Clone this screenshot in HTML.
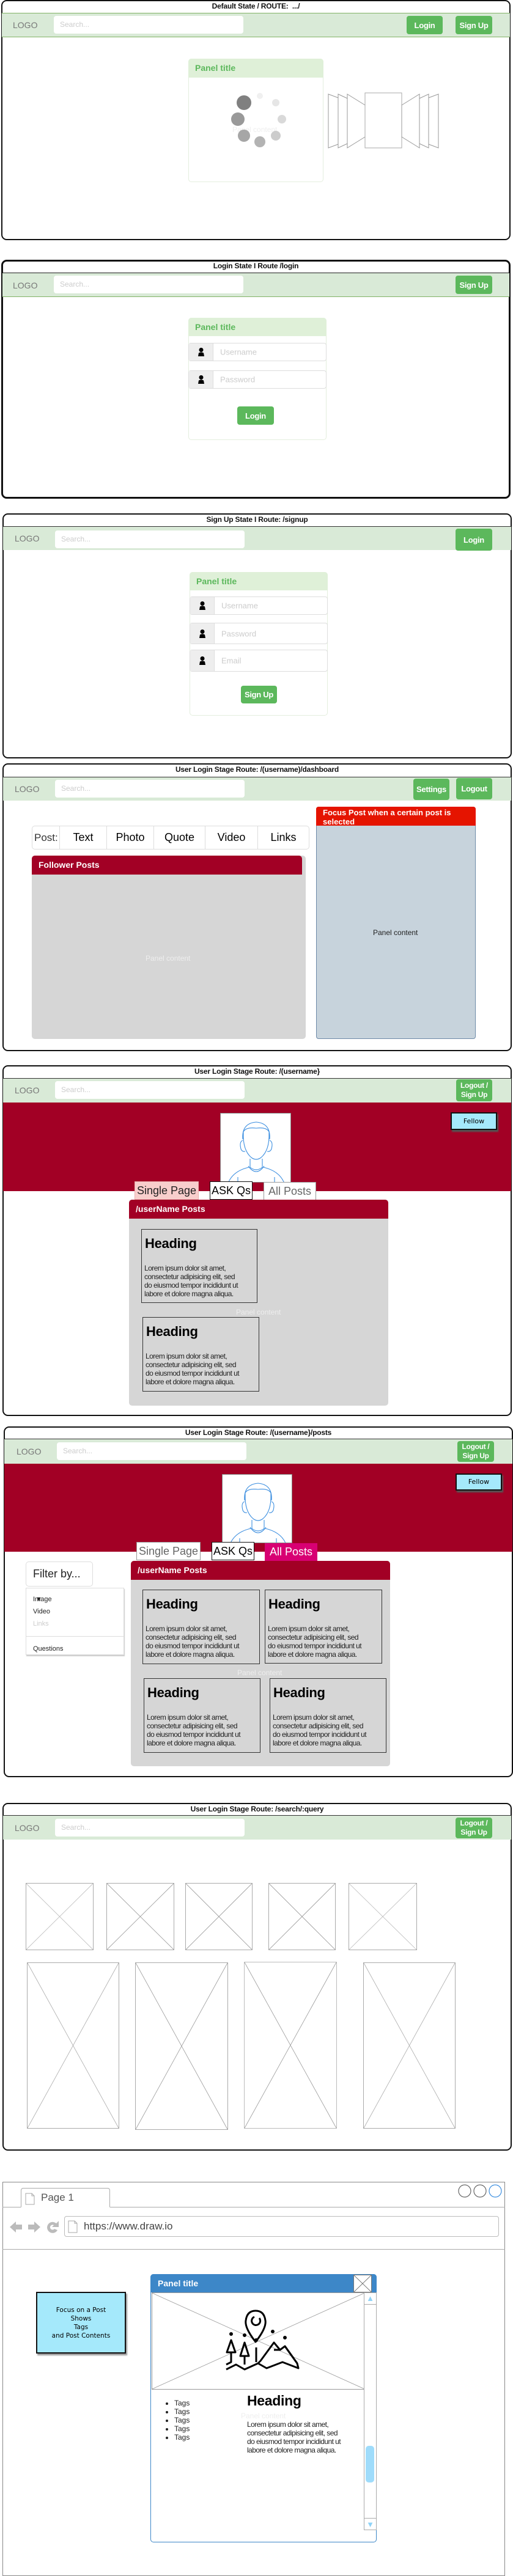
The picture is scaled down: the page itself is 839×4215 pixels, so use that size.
<!DOCTYPE html>
<html><head><meta charset="utf-8">
<style>
*{box-sizing:border-box;margin:0;padding:0}
body{width:839px;height:4211px;position:relative;background:#fff;font-family:"Liberation Sans",Arial,sans-serif;overflow:hidden}
.a{position:absolute}
.fr{position:absolute;border:2px solid #111;border-radius:9px;background:#fff}
.tt{position:absolute;font-size:12px;font-weight:bold;color:#111;text-align:center;line-height:21px;letter-spacing:-0.2px}
.nav{position:absolute;background:#d9ead7;border-top:1.5px solid #333;border-bottom:1px solid #a9cfa4}
.logo{position:absolute;font-size:14px;color:#777;line-height:20px}
.srch{position:absolute;background:#fff;border-radius:4px;font-size:12px;color:#ccc;padding-left:10px;line-height:28px}
.btn{position:absolute;background:#5cb85c;border-radius:4px;color:#fff;font-weight:bold;font-size:13px;display:flex;align-items:center;justify-content:center;text-align:center;line-height:15px;letter-spacing:-0.3px}
.pnl{position:absolute;border:1px solid #e4eede;border-radius:5px;background:#fff}
.ph{position:absolute;background:#dff0d8;color:#5cb85c;font-weight:bold;font-size:14px;padding-left:11px;border-radius:5px 5px 0 0}
.inp{position:absolute;border:1px solid #ddd;border-radius:4px;background:#fff;font-size:13px;color:#ccc}
.inp .ic{position:absolute;left:0;top:0;bottom:0;width:40px;background:#eee;border-right:1px solid #ddd;display:flex;align-items:center;justify-content:center}
.inp span{position:absolute;left:51px;top:50%;transform:translateY(-50%)}
.card{position:absolute;border:1.5px solid #333;background:#d6d6d6}
.card h3{font-size:22px;font-weight:bold;color:#000;margin:10px 0 0 5px;letter-spacing:-0.3px}
.card p{font-size:12px;line-height:14px;color:#222;margin:20px 0 0 4px;letter-spacing:-0.55px;white-space:nowrap}
.xb{position:absolute;border:1px solid #aaa}
.xb svg{position:absolute;left:0;top:0;width:100%;height:100%}
.hand{font-family:"DejaVu Sans",sans-serif}
</style></head><body>

<!-- ===== Frame 1 ===== -->
<div class="fr" style="left:2px;top:0;width:833px;height:393px"></div>
<div class="tt" style="left:2px;top:0;width:833px">Default State / ROUTE: &nbsp;.../</div>
<div class="nav" style="left:3px;top:21px;width:831px;height:40px;border-bottom:1px solid #82b366;border-top:1px solid #82b366"></div>
<div class="logo" style="left:21px;top:31px">LOGO</div>
<div class="srch" style="left:88px;top:26px;width:310px;height:29px">Search...</div>
<div class="btn" style="left:665px;top:26px;width:59px;height:30px">Login</div>
<div class="btn" style="left:745px;top:26px;width:60px;height:30px">Sign Up</div>
<div class="pnl" style="left:308px;top:96px;width:221px;height:202px"></div>
<div class="ph" style="left:308px;top:96px;width:221px;height:31px;line-height:31px">Panel title</div>
<div class="a" style="left:380px;top:205px;font-size:12px;color:#eee">Panel content</div>
<svg class="a" style="left:370px;top:145px" width="110" height="110" viewBox="370 145 110 110">
<circle cx="425" cy="157" r="5" fill="#f0f0f0"/>
<circle cx="451" cy="168" r="6" fill="#e6e6e6"/>
<circle cx="461" cy="195" r="7" fill="#d9d9d9"/>
<circle cx="451" cy="222" r="8" fill="#ccc"/>
<circle cx="425" cy="232" r="9" fill="#b3b3b3"/>
<circle cx="399" cy="222" r="10" fill="#a6a6a6"/>
<circle cx="389" cy="195" r="11" fill="#999"/>
<circle cx="399" cy="168" r="12" fill="#808080"/>
</svg>
<svg class="a" style="left:536px;top:150px" width="184" height="95" viewBox="536 150 184 95" fill="#fff" stroke="#999" stroke-width="1">
<polygon points="537,154 553,160 553,236 537,242"/>
<polygon points="553,154 568,161 568,235 553,242"/>
<polygon points="568,154 597,172 597,224 568,242"/>
<rect x="597" y="152" width="60" height="90" stroke="#aaa"/>
<polygon points="657,172 686,154 686,242 657,224"/>
<polygon points="686,161 701,154 701,242 686,235"/>
<polygon points="701,160 717,154 717,242 701,236"/>
</svg>

<!-- ===== Frame 2 ===== -->
<div class="fr" style="left:2px;top:425px;width:833px;height:391px;border-width:3px"></div>
<div class="tt" style="left:2px;top:425px;width:833px">Login State I Route /login</div>
<div class="nav" style="left:4px;top:446px;width:829px;height:40px;border-top:1.5px solid #222;border-bottom:1px solid #82b366"></div>
<div class="logo" style="left:21px;top:457px">LOGO</div>
<div class="srch" style="left:88px;top:451px;width:310px;height:29px">Search...</div>
<div class="btn" style="left:745px;top:451px;width:60px;height:30px">Sign Up</div>
<div class="pnl" style="left:308px;top:520px;width:226px;height:200px"></div>
<div class="ph" style="left:308px;top:520px;width:226px;height:30px;line-height:30px">Panel title</div>
<div class="inp" style="left:308px;top:561px;width:226px;height:30px"><div class="ic"><svg width="16" height="16" viewBox="0 0 16 16"><circle cx="8" cy="4.5" r="3.5"/><path d="M3 15 L4 9.5 Q8 7 12 9.5 L13 15Z"/></svg></div><span>Username</span></div>
<div class="inp" style="left:308px;top:606px;width:226px;height:30px"><div class="ic"><svg width="16" height="16" viewBox="0 0 16 16"><circle cx="8" cy="4.5" r="3.5"/><path d="M3 15 L4 9.5 Q8 7 12 9.5 L13 15Z"/></svg></div><span>Password</span></div>
<div class="btn" style="left:388px;top:665px;width:60px;height:30px">Login</div>

<!-- ===== Frame 3 ===== -->
<div class="fr" style="left:4px;top:840px;width:833px;height:401px"></div>
<div class="tt" style="left:4px;top:840px;width:833px">Sign Up State I Route: /signup</div>
<div class="nav" style="left:5px;top:861px;width:831px;height:39px;border-bottom:none"></div>
<div class="logo" style="left:24px;top:871px">LOGO</div>
<div class="srch" style="left:90px;top:868px;width:310px;height:29px">Search...</div>
<div class="btn" style="left:745px;top:865px;width:60px;height:36px">Login</div>
<div class="pnl" style="left:310px;top:936px;width:226px;height:235px"></div>
<div class="ph" style="left:310px;top:936px;width:226px;height:30px;line-height:30px">Panel title</div>
<div class="inp" style="left:310px;top:976px;width:226px;height:30px"><div class="ic"><svg width="16" height="16" viewBox="0 0 16 16"><circle cx="8" cy="4.5" r="3.5"/><path d="M3 15 L4 9.5 Q8 7 12 9.5 L13 15Z"/></svg></div><span>Username</span></div>
<div class="inp" style="left:310px;top:1019px;width:226px;height:35px"><div class="ic"><svg width="16" height="16" viewBox="0 0 16 16"><circle cx="8" cy="4.5" r="3.5"/><path d="M3 15 L4 9.5 Q8 7 12 9.5 L13 15Z"/></svg></div><span>Password</span></div>
<div class="inp" style="left:310px;top:1063px;width:226px;height:36px"><div class="ic"><svg width="16" height="16" viewBox="0 0 16 16"><circle cx="8" cy="4.5" r="3.5"/><path d="M3 15 L4 9.5 Q8 7 12 9.5 L13 15Z"/></svg></div><span>Email</span></div>
<div class="btn" style="left:394px;top:1122px;width:59px;height:29px">Sign Up</div>

<!-- ===== Frame 4 ===== -->
<div class="fr" style="left:4px;top:1249px;width:833px;height:471px"></div>
<div class="tt" style="left:4px;top:1249px;width:833px">User Login Stage Route: /(username)/dashboard</div>
<div class="nav" style="left:5px;top:1271px;width:831px;height:39px;border-bottom:none"></div>
<div class="logo" style="left:24px;top:1281px">LOGO</div>
<div class="srch" style="left:90px;top:1276px;width:310px;height:29px">Search...</div>
<div class="btn" style="left:676px;top:1274px;width:59px;height:35px">Settings</div>
<div class="btn" style="left:746px;top:1273px;width:59px;height:35px">Logout</div>
<div class="a" style="left:52px;top:1351px;width:454px;height:39px;border:1px solid #ddd;border-radius:5px;display:flex;font-size:18px;align-items:stretch">
<div style="width:45px;border-right:1px solid #ddd;display:flex;align-items:center;padding-left:3px;color:#333;font-size:17px">Post:</div>
<div style="width:77px;border-right:1px solid #ddd;display:flex;align-items:center;justify-content:center">Text</div>
<div style="width:77px;border-right:1px solid #ddd;display:flex;align-items:center;justify-content:center">Photo</div>
<div style="width:84px;border-right:1px solid #ddd;display:flex;align-items:center;justify-content:center">Quote</div>
<div style="width:86px;border-right:1px solid #ddd;display:flex;align-items:center;justify-content:center">Video</div>
<div style="flex:1;display:flex;align-items:center;justify-content:center">Links</div>
</div>
<div class="a" style="left:52px;top:1400px;width:448px;height:300px;background:#d6d6d6;border-radius:5px"></div>
<div class="a" style="left:52px;top:1400px;width:442px;height:31px;background:#a20025;border-radius:5px 5px 0 0;color:#fff;font-weight:bold;font-size:14px;line-height:31px;padding-left:11px">Follower Posts</div>
<div class="a" style="left:238px;top:1561px;font-size:12px;color:#eee">Panel content</div>
<div class="a" style="left:517px;top:1320px;width:261px;height:380px;background:#c7d3dc;border:1px solid #6d8aa8;border-radius:4px"></div>
<div class="a" style="left:517px;top:1320px;width:261px;height:31px;background:#e51400;border-radius:4px 4px 0 0;color:#fff;font-weight:bold;font-size:13px;line-height:15px;padding:2px 0 0 11px">Focus Post when a certain post is selected</div>
<div class="a" style="left:610px;top:1519px;font-size:12px;color:#222">Panel content</div>

<!-- ===== Frame 5 ===== -->
<div class="fr" style="left:4px;top:1743px;width:833px;height:574px"></div>
<div class="tt" style="left:4px;top:1743px;width:833px">User Login Stage Route: /(username}</div>
<div class="nav" style="left:5px;top:1764px;width:831px;height:40px;border-bottom:none"></div>
<div class="logo" style="left:24px;top:1774px">LOGO</div>
<div class="srch" style="left:90px;top:1769px;width:310px;height:29px">Search...</div>
<div class="btn" style="left:746px;top:1766px;width:59px;height:36px;font-size:12px">Logout /<br>Sign Up</div>
<div class="a" style="left:5px;top:1804px;width:831px;height:145px;background:#a20025"></div>
<div class="a" style="left:360px;top:1821px;width:116px;height:114px;background:#fff;border:1px solid #888;overflow:hidden">
<svg width="116" height="114" viewBox="0 0 116 114" fill="none" stroke="#3d8fe0" stroke-width="1.1">
<path d="M36 42 Q34 16 58 14 Q82 16 80 42 L79 30 Q75 22 58 24 Q41 22 37 30Z"/>
<path d="M37 32 Q36 60 50 72 Q58 78 66 72 Q80 60 79 32"/>
<path d="M36 44 Q30 46 33 58 Q35 63 40 62"/><path d="M80 44 Q86 46 83 58 Q81 63 76 62"/>
<path d="M48 74 L48 88 Q58 96 68 88 L68 74"/>
<path d="M45 86 Q58 104 71 86"/>
<path d="M46 88 Q20 94 12 114"/><path d="M70 88 Q96 94 104 114"/>
<path d="M28 104 L28 114"/><path d="M88 104 L88 114"/>
</svg></div>
<div class="a hand" style="left:737px;top:1820px;width:76px;height:29px;background:#a5e9fb;border:2px solid #111;box-shadow:2px 3px 2px #555;font-size:11px;text-align:center;line-height:25px">Fellow</div>
<div class="a" style="left:220px;top:1933px;width:105px;height:30px;background:#f8cecc;border:1px solid #e8b0ae;font-size:18px;line-height:28px;text-align:center;color:#222">Single Page</div>
<div class="a" style="left:343px;top:1933px;width:70px;height:30px;background:#fff;border:1px solid #111;font-size:18px;line-height:28px;text-align:center">ASK Qs</div>
<div class="a" style="left:431px;top:1934px;width:86px;height:30px;background:#fff;border:1px solid #999;font-size:18px;line-height:28px;text-align:center;color:#666">All Posts</div>
<div class="a" style="left:211px;top:1963px;width:424px;height:337px;background:#d6d6d6;border-radius:5px"></div>
<div class="a" style="left:211px;top:1963px;width:424px;height:31px;background:#a20025;border-radius:5px 5px 0 0;color:#fff;font-weight:bold;font-size:14px;line-height:31px;padding-left:11px">/userName Posts</div>
<div class="a" style="left:386px;top:2140px;font-size:12px;color:#eee">Panel content</div>
<div class="card" style="left:231px;top:2011px;width:190px;height:121px"><h3>Heading</h3><p>Lorem ipsum dolor sit amet,<br>consectetur adipisicing elit, sed<br>do eiusmod tempor incididunt ut<br>labore et dolore magna aliqua.</p></div>
<div class="card" style="left:233px;top:2155px;width:191px;height:122px"><h3>Heading</h3><p>Lorem ipsum dolor sit amet,<br>consectetur adipisicing elit, sed<br>do eiusmod tempor incididunt ut<br>labore et dolore magna aliqua.</p></div>

<!-- ===== Frame 6 ===== -->
<div class="fr" style="left:6px;top:2334px;width:833px;height:574px"></div>
<div class="tt" style="left:6px;top:2334px;width:833px">User Login Stage Route: /(username}/posts</div>
<div class="nav" style="left:7px;top:2354px;width:831px;height:41px;border-bottom:none"></div>
<div class="logo" style="left:27px;top:2365px">LOGO</div>
<div class="srch" style="left:93px;top:2360px;width:310px;height:29px">Search...</div>
<div class="btn" style="left:748px;top:2358px;width:60px;height:34px;font-size:12px">Logout /<br>Sign Up</div>
<div class="a" style="left:7px;top:2395px;width:831px;height:144px;background:#a20025"></div>
<div class="a" style="left:363px;top:2412px;width:115px;height:113px;background:#fff;border:1px solid #888;overflow:hidden">
<svg width="116" height="114" viewBox="0 0 116 114" fill="none" stroke="#3d8fe0" stroke-width="1.1">
<path d="M36 42 Q34 16 58 14 Q82 16 80 42 L79 30 Q75 22 58 24 Q41 22 37 30Z"/>
<path d="M37 32 Q36 60 50 72 Q58 78 66 72 Q80 60 79 32"/>
<path d="M36 44 Q30 46 33 58 Q35 63 40 62"/><path d="M80 44 Q86 46 83 58 Q81 63 76 62"/>
<path d="M48 74 L48 88 Q58 96 68 88 L68 74"/>
<path d="M45 86 Q58 104 71 86"/>
<path d="M46 88 Q20 94 12 114"/><path d="M70 88 Q96 94 104 114"/>
<path d="M28 104 L28 114"/><path d="M88 104 L88 114"/>
</svg></div>
<div class="a hand" style="left:745px;top:2411px;width:76px;height:28px;background:#a5e9fb;border:2px solid #111;box-shadow:2px 3px 2px #555;font-size:11px;text-align:center;line-height:24px">Fellow</div>
<div class="a" style="left:223px;top:2523px;width:105px;height:30px;background:#fff;border:1px solid #999;font-size:18px;line-height:28px;text-align:center;color:#666">Single Page</div>
<div class="a" style="left:346px;top:2523px;width:70px;height:30px;background:#fff;border:1px solid #111;font-size:18px;line-height:28px;text-align:center">ASK Qs</div>
<div class="a" style="left:433px;top:2525px;width:86px;height:30px;background:#d80073;font-size:18px;line-height:29px;text-align:center;color:#fff">All Posts</div>
<div class="a" style="left:42px;top:2555px;width:110px;height:41px;border:1px solid #ddd;border-radius:5px;font-size:18px;line-height:39px;padding-left:11px;color:#222">Filter by... <span style="font-size:11px;margin-left:4px">&#9660;</span></div>
<div class="a" style="left:42px;top:2598px;width:161px;height:110px;border:1px solid #ddd;box-shadow:1px 2px 1px #ccc;font-size:11px;color:#222">
<div class="a" style="left:11px;top:12px">Image</div>
<div class="a" style="left:11px;top:32px">Video</div>
<div class="a" style="left:11px;top:52px;color:#ccc">Links</div>
<div class="a" style="left:0;top:78px;width:159px;border-top:1px solid #ddd"></div>
<div class="a" style="left:11px;top:93px">Questions</div>
</div>
<div class="a" style="left:214px;top:2554px;width:424px;height:336px;background:#d6d6d6;border-radius:5px"></div>
<div class="a" style="left:214px;top:2554px;width:424px;height:31px;background:#a20025;border-radius:5px 5px 0 0;color:#fff;font-weight:bold;font-size:14px;line-height:31px;padding-left:11px">/userName Posts</div>
<div class="a" style="left:388px;top:2730px;font-size:12px;color:#eee">Panel content</div>
<div class="card" style="left:233px;top:2601px;width:192px;height:122px"><h3>Heading</h3><p>Lorem ipsum dolor sit amet,<br>consectetur adipisicing elit, sed<br>do eiusmod tempor incididunt ut<br>labore et dolore magna aliqua.</p></div>
<div class="card" style="left:433px;top:2601px;width:192px;height:121px"><h3>Heading</h3><p>Lorem ipsum dolor sit amet,<br>consectetur adipisicing elit, sed<br>do eiusmod tempor incididunt ut<br>labore et dolore magna aliqua.</p></div>
<div class="card" style="left:235px;top:2746px;width:191px;height:122px"><h3>Heading</h3><p>Lorem ipsum dolor sit amet,<br>consectetur adipisicing elit, sed<br>do eiusmod tempor incididunt ut<br>labore et dolore magna aliqua.</p></div>
<div class="card" style="left:441px;top:2746px;width:191px;height:122px"><h3>Heading</h3><p>Lorem ipsum dolor sit amet,<br>consectetur adipisicing elit, sed<br>do eiusmod tempor incididunt ut<br>labore et dolore magna aliqua.</p></div>

<!-- ===== Frame 7 ===== -->
<div class="fr" style="left:4px;top:2950px;width:833px;height:569px"></div>
<div class="tt" style="left:4px;top:2950px;width:833px">User Login Stage Route: /search/:query</div>
<div class="nav" style="left:5px;top:2970px;width:831px;height:40px;border-bottom:none"></div>
<div class="logo" style="left:24px;top:2981px">LOGO</div>
<div class="srch" style="left:90px;top:2976px;width:310px;height:29px">Search...</div>
<div class="btn" style="left:745px;top:2974px;width:60px;height:34px;font-size:12px">Logout /<br>Sign Up</div>
<div class="xb" style="left:42px;top:3081px;width:111px;height:110px"><svg viewBox="0 0 100 100" preserveAspectRatio="none"><path d="M0 0L100 100M100 0L0 100" stroke="#bbb" stroke-width="0.8" vector-effect="non-scaling-stroke"/></svg></div>
<div class="xb" style="left:174px;top:3081px;width:111px;height:110px"><svg viewBox="0 0 100 100" preserveAspectRatio="none"><path d="M0 0L100 100M100 0L0 100" stroke="#999" stroke-width="0.8" vector-effect="non-scaling-stroke"/></svg></div>
<div class="xb" style="left:303px;top:3081px;width:110px;height:110px"><svg viewBox="0 0 100 100" preserveAspectRatio="none"><path d="M0 0L100 100M100 0L0 100" stroke="#999" stroke-width="0.8" vector-effect="non-scaling-stroke"/></svg></div>
<div class="xb" style="left:439px;top:3081px;width:110px;height:110px"><svg viewBox="0 0 100 100" preserveAspectRatio="none"><path d="M0 0L100 100M100 0L0 100" stroke="#999" stroke-width="0.8" vector-effect="non-scaling-stroke"/></svg></div>
<div class="xb" style="left:570px;top:3081px;width:112px;height:110px"><svg viewBox="0 0 100 100" preserveAspectRatio="none"><path d="M0 0L100 100M100 0L0 100" stroke="#bbb" stroke-width="0.8" vector-effect="non-scaling-stroke"/></svg></div>
<div class="xb" style="left:44px;top:3211px;width:151px;height:272px"><svg viewBox="0 0 100 100" preserveAspectRatio="none"><path d="M0 0L100 100M100 0L0 100" stroke="#aaa" stroke-width="0.8" vector-effect="non-scaling-stroke"/></svg></div>
<div class="xb" style="left:221px;top:3211px;width:152px;height:274px"><svg viewBox="0 0 100 100" preserveAspectRatio="none"><path d="M0 0L100 100M100 0L0 100" stroke="#999" stroke-width="0.8" vector-effect="non-scaling-stroke"/></svg></div>
<div class="xb" style="left:399px;top:3210px;width:152px;height:273px;border-color:#bbb"><svg viewBox="0 0 100 100" preserveAspectRatio="none"><path d="M0 0L100 100M100 0L0 100" stroke="#999" stroke-width="0.8" vector-effect="non-scaling-stroke"/></svg></div>
<div class="xb" style="left:594px;top:3211px;width:151px;height:272px"><svg viewBox="0 0 100 100" preserveAspectRatio="none"><path d="M0 0L100 100M100 0L0 100" stroke="#aaa" stroke-width="0.8" vector-effect="non-scaling-stroke"/></svg></div>

<!-- ===== Browser mock ===== -->
<div class="a" style="left:4px;top:3570px;width:822px;height:645px;border:1px solid #888;background:#fff"></div>
<div class="a" style="left:4px;top:3611px;width:822px;border-top:1px solid #aaa"></div>
<div class="a" style="left:34px;top:3580px;width:146px;height:32px;border:1px solid #aaa;border-bottom:1px solid #fff;border-radius:4px 4px 0 0;background:#fff;font-size:17px;color:#555;line-height:30px;padding-left:32px">Page 1</div>
<svg class="a" style="left:41px;top:3588px" width="16" height="20" viewBox="0 0 16 20" fill="#fff" stroke="#aaa"><path d="M1 1H11L15 5V19H1Z M11 1V5H15"/></svg>
<svg class="a" style="left:745px;top:3573px" width="80" height="26" viewBox="745 3573 80 26" fill="none" stroke-width="1.2">
<circle cx="760" cy="3585" r="10" stroke="#666"/><circle cx="785" cy="3585" r="10" stroke="#666"/><circle cx="810" cy="3585" r="10" stroke="#3d8fe0"/></svg>
<svg class="a" style="left:14px;top:3631px" width="86" height="26" viewBox="0 0 86 26" fill="#bbb">
<path d="M2 13L12 4V9H22V17H12V22Z"/><path d="M52 13L42 4V9H32V17H42V22Z"/>
<path d="M78 7A9 9 0 1 0 80 18L75 16A4 4 0 1 1 74 10L71 13H82V3Z"/></svg>
<div class="a" style="left:105px;top:3626px;width:711px;height:34px;border:1px solid #bbb;border-radius:4px;font-size:17px;color:#444;line-height:32px;padding-left:31px">https://www.draw.io</div>
<svg class="a" style="left:111px;top:3633px" width="16" height="21" viewBox="0 0 16 21" fill="#fff" stroke="#aaa"><path d="M1 1H11L15 5V20H1Z M11 1V5H15"/></svg>
<div class="a" style="left:4px;top:3680px;width:822px;border-top:1px solid #aaa"></div>
<div class="a hand" style="left:59px;top:3750px;width:147px;height:101px;background:#a5e9fb;border:2px solid #111;box-shadow:2px 3px 2px #999;font-size:10.5px;text-align:center;display:flex;align-items:center;justify-content:center;line-height:14px">Focus on a Post<br>Shows<br>Tags<br>and Post Contents</div>
<div class="a" style="left:246px;top:3721px;width:370px;height:439px;border:1px solid #3d87c8;border-radius:5px;background:#fff"></div>
<div class="a" style="left:246px;top:3721px;width:370px;height:30px;background:#3d87c8;border-radius:5px 5px 0 0;color:#fff;font-weight:bold;font-size:14px;line-height:30px;padding-left:12px">Panel title</div>
<div class="xb" style="left:578px;top:3722px;width:30px;height:29px;background:#fff;border-color:#777"><svg viewBox="0 0 100 100" preserveAspectRatio="none"><path d="M0 0L100 100M100 0L0 100" stroke="#555" stroke-width="0.8" vector-effect="non-scaling-stroke"/></svg></div>
<div class="xb" style="left:248px;top:3751px;width:349px;height:159px;border-color:#999"><svg viewBox="0 0 100 100" preserveAspectRatio="none"><path d="M0 0L100 100M100 0L0 100" stroke="#999" stroke-width="0.8" vector-effect="non-scaling-stroke"/></svg></div>
<svg class="a" style="left:366px;top:3779px" width="126" height="106" viewBox="0 0 126 106" fill="none" stroke="#000" stroke-width="3" stroke-linejoin="round">
<path d="M52 53 Q34 30 36 18 Q38 2 52 2 Q66 2 68 18 Q70 30 52 53Z"/>
<path d="M58 14 A7 7 0 1 1 50 12"/>
<path d="M4 98 L20 90 L34 98 L56 88 L70 96 L96 86 L122 96 L120 88 L100 60 L92 66 L82 54 L60 84 L56 88"/>
<path d="M100 60 L120 88"/><path d="M82 66 L92 66"/>
<path d="M5 70 L12 50 L19 70 Z M12 70 V86 L4 90"/>
<path d="M27 76 L34 54 L41 76 Z M34 76 V90"/>
<path d="M53 62 V86"/>
<circle cx="12" cy="40" r="1.5" fill="#000"/><circle cx="34" cy="42" r="1.5" fill="#000"/><circle cx="53" cy="50" r="1.5" fill="#000"/><circle cx="80" cy="36" r="1.5" fill="#000"/><circle cx="100" cy="46" r="1.5" fill="#000"/>
</svg>
<div class="a" style="left:595px;top:3751px;width:21px;height:389px;border:1px solid #aaa;background:#fff"></div>
<div class="a" style="left:595px;top:3751px;width:21px;height:20px;border-bottom:1px solid #aaa;color:#8fd3f7;font-size:13px;text-align:center;line-height:20px">&#9650;</div>
<div class="a" style="left:595px;top:4120px;width:21px;height:20px;border-top:1px solid #aaa;color:#8fd3f7;font-size:13px;text-align:center;line-height:20px">&#9660;</div>
<div class="a" style="left:598px;top:4002px;width:14px;height:60px;background:#9fdcfb;border-radius:5px"></div>
<ul class="a" style="left:285px;top:3925px;font-size:12px;line-height:14px;color:#222;list-style:disc">
<li>Tags</li><li>Tags</li><li>Tags</li><li>Tags</li><li>Tags</li></ul>
<div class="a" style="left:404px;top:3915px;font-size:23px;font-weight:bold;letter-spacing:-0.3px">Heading</div>
<div class="a" style="left:394px;top:3946px;font-size:12px;color:#eee">Panel content</div>
<div class="a" style="left:404px;top:3960px;font-size:12px;line-height:14px;color:#222;letter-spacing:-0.55px;white-space:nowrap">Lorem ipsum dolor sit amet,<br>consectetur adipisicing elit, sed<br>do eiusmod tempor incididunt ut<br>labore et dolore magna aliqua.</div>
</body></html>
